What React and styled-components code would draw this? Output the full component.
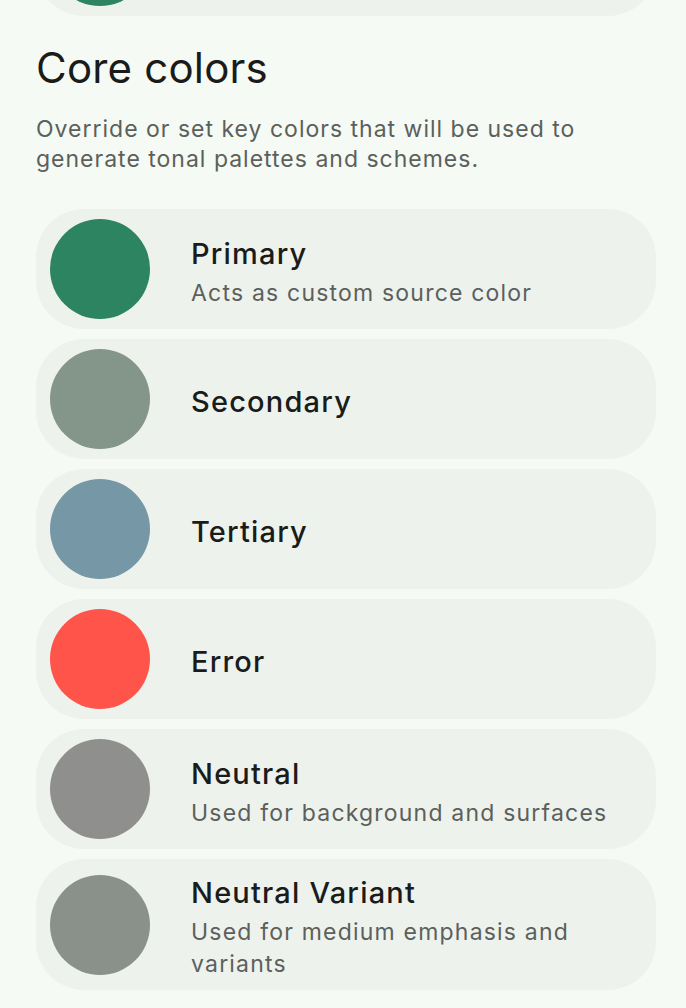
import React from 'react';
import styled, { createGlobalStyle } from 'styled-components';

const GlobalStyle = createGlobalStyle`
  html, body {
    margin: 0;
    padding: 0;
    background: #f5faf5;
  }
  body {
    font-family: Inter, Roboto, 'Noto Sans', sans-serif;
    color: #191c1a;
  }
`;

const Page = styled.div`
  padding: 0 30px 0 36px;
  display: flex;
  flex-direction: column;
`;

/* the card above, scrolled mostly out of view */
const Clipped = styled.div`
  height: 16px;
  overflow: hidden;
  display: flex;
  flex-direction: column;
  justify-content: flex-end;
`;

const Heading = styled.h2`
  margin: 26px 0 0;
  font-size: 42px;
  line-height: 52px;
  font-weight: 400;
  letter-spacing: 0.2px;
  color: #191c1a;
`;

const Description = styled.p`
  margin: 20px 0 0;
  max-width: 600px;
  font-size: 23px;
  line-height: 30px;
  letter-spacing: 1px;
  color: #5b605c;
`;

const List = styled.div`
  margin-top: 35px;
  display: flex;
  flex-direction: column;
  gap: 10px;
`;

const Card = styled.div`
  flex-shrink: 0;
  display: flex;
  align-items: center;
  min-height: 120px;
  box-sizing: border-box;
  padding: 10px 24px 10px 14px;
  background: #eef2ed;
  border-radius: 48px;
`;

const Swatch = styled.div`
  flex-shrink: 0;
  width: 100px;
  height: 100px;
  border-radius: 50%;
  background: ${(p) => p.$color};
`;

const Texts = styled.div`
  margin-left: 41px;
  padding-top: 6px;
  display: flex;
  flex-direction: column;
  gap: 5px;
`;

const Title = styled.div`
  font-size: 29px;
  line-height: 36px;
  font-weight: 500;
  letter-spacing: 1.2px;
  color: #191c1a;
`;

const Subtitle = styled.div`
  font-size: 23px;
  line-height: 32px;
  letter-spacing: 1.2px;
  color: #5b605c;
`;

const colors = [
  { name: 'Primary', color: '#2c8460', note: 'Acts as custom source color' },
  { name: 'Secondary', color: '#84958a' },
  { name: 'Tertiary', color: '#7697a5' },
  { name: 'Error', color: '#ff5449' },
  { name: 'Neutral', color: '#8f908e', note: 'Used for background and surfaces' },
  { name: 'Neutral Variant', color: '#8a918b', note: 'Used for medium emphasis and variants' },
];

const ColorRow = ({ name, color, note }) => (
  <Card>
    <Swatch $color={color} />
    <Texts>
      <Title>{name}</Title>
      {note && <Subtitle>{note}</Subtitle>}
    </Texts>
  </Card>
);

const App = () => (
  <>
    <GlobalStyle />
    <Page>
      <Clipped>
        <Card>
          <Swatch $color="#2c8460" />
        </Card>
      </Clipped>
      <Heading>Core colors</Heading>
      <Description>
        Override or set key colors that will be used to generate tonal palettes and schemes.
      </Description>
      <List>
        {colors.map((c) => (
          <ColorRow key={c.name} {...c} />
        ))}
      </List>
    </Page>
  </>
);

export default App;
